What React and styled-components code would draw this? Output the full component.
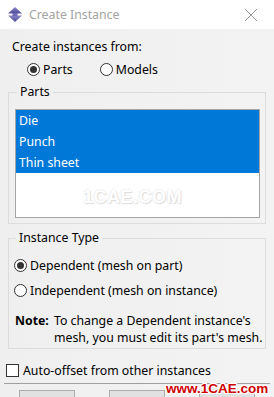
import React from "react";
import styled, { createGlobalStyle } from "styled-components";

const GlobalStyle = createGlobalStyle`
  html, body {
    margin: 0;
    padding: 0;
    background: #f0f0f0;
  }
  body {
    font-family: "Noto Sans", "Segoe UI", sans-serif;
    font-size: 12.3px;
    color: #000;
  }
`;

const Window = styled.div`
  position: relative;
  width: 274px;
  height: 397px;
  overflow: hidden;
  background: linear-gradient(90deg, #efefef 0%, #f3f3f3 100%);
`;

const TitleBar = styled.div`
  height: 29px;
  display: flex;
  align-items: center;
  padding: 0 16px 0 7px;
  background: #fff;
  box-sizing: border-box;
`;

const Title = styled.span`
  flex: 1;
  margin-left: 6px;
  font-size: 12.3px;
  color: #a3a3a3;
`;

const Content = styled.div`
  padding: 10px 8px 0;
`;

const Label = styled.div`
  line-height: 16px;
  padding-left: 4px;
`;

const RadioRow = styled.div`
  display: flex;
  align-items: center;
  gap: ${(p) => p.$gap || 0}px;
  height: ${(p) => p.$h || 18}px;
  margin-top: ${(p) => p.$mt || 0}px;
  padding-left: ${(p) => p.$pl || 0}px;
`;

const RadioItem = styled.label`
  display: flex;
  align-items: center;
  gap: 3px;
`;

const Radio = styled.span`
  position: relative;
  width: 13px;
  height: 13px;
  box-sizing: border-box;
  border: 1px solid #333;
  border-radius: 50%;
  background: #fff;
  &::after {
    content: "";
    display: ${(p) => (p.$checked ? "block" : "none")};
    position: absolute;
    left: 2px;
    top: 2px;
    width: 7px;
    height: 7px;
    border-radius: 50%;
    background: #333;
  }
`;

const Group = styled.fieldset`
  margin: ${(p) => p.$mt || 0}px 0 0;
  padding: ${(p) => p.$pt || 0}px ${(p) => p.$pr || 5}px ${(p) => p.$pb || 0}px
    ${(p) => p.$pl || 6}px;
  border: 1px solid #dcdcdc;
  min-width: 0;
`;

const Legend = styled.legend`
  margin-left: 2px;
  padding: 0 3px;
  line-height: 16px;
  color: #000;
`;

const ListBox = styled.div`
  height: 109px;
  box-sizing: border-box;
  border: 1px solid #a5a5a5;
  background: #fff;
`;

const ListItem = styled.div`
  height: 21px;
  line-height: 21px;
  padding-left: 3px;
  background: ${(p) => (p.$selected ? "#0078d7" : "transparent")};
  color: ${(p) => (p.$selected ? "#fff" : "#000")};
`;

const Note = styled.div`
  display: grid;
  grid-template-columns: 39px 1fr;
  margin-top: 12px;
  padding-left: 1px;
  line-height: 17px;
  white-space: nowrap;
`;

const NoteLabel = styled.span`
  font-weight: 700;
`;

const Footer = styled.div`
  padding: 12px 4px 0;
`;

const CheckRow = styled.label`
  display: flex;
  align-items: center;
  gap: 4px;
  height: 18px;
  padding-left: 2px;
`;

const Checkbox = styled.span`
  width: 13px;
  height: 13px;
  box-sizing: border-box;
  border: 1px solid #333;
  background: #fff;
`;

const Separator = styled.div`
  margin-top: 4px;
  height: 1px;
  background: #a0a0a0;
`;

const ButtonRow = styled.div`
  display: flex;
  gap: 34px;
  margin-top: 6px;
  padding-left: 15px;
`;

const Button = styled.div`
  width: 56px;
  height: 23px;
  box-sizing: border-box;
  border: 1px solid #adadad;
  background: #e1e1e1;
`;

const Watermark = styled.div`
  position: absolute;
  left: 83px;
  top: 187px;
  font-family: "Liberation Sans", Arial, sans-serif;
  font-weight: 700;
  font-size: 18px;
  letter-spacing: 0.5px;
  color: #fff;
  text-shadow: 0 0 2px #d4d4d4, 1px 1px 1px #e0e0e0;
`;

const SiteMark = styled.div`
  position: absolute;
  left: 166px;
  top: 381px;
  font-family: "Liberation Sans", Arial, sans-serif;
  font-weight: 700;
  font-size: 13.5px;
  color: #d00000;
  text-shadow: 1px 0 0 #fff, -1px 0 0 #fff, 0 1px 0 #fff, 0 -1px 0 #fff,
    1px 1px 0 #fff, -1px -1px 0 #fff, 1px -1px 0 #fff, -1px 1px 0 #fff;
`;

const AppIcon = () => (
  <svg width="16" height="15" viewBox="0 0 16 15">
    <defs>
      <linearGradient id="ig" x1="0" y1="0" x2="0" y2="1">
        <stop offset="0" stopColor="#8a86c8" />
        <stop offset="1" stopColor="#4d4a9a" />
      </linearGradient>
    </defs>
    <path d="M8 0 L15 6.5 L1 6.5 Z" fill="url(#ig)" />
    <path d="M1 8.5 L15 8.5 L8 15 Z" fill="url(#ig)" />
    <rect x="5.5" y="6" width="5" height="3" fill="#6d69b3" />
  </svg>
);

const CloseIcon = () => (
  <svg width="14" height="14" viewBox="0 0 14 14">
    <path d="M1 1 L13 13 M13 1 L1 13" stroke="#9a9a9a" strokeWidth="1" />
  </svg>
);

export default function App() {
  const parts = ["Die", "Punch", "Thin sheet"];

  return (
    <Window>
      <GlobalStyle />
      <TitleBar>
        <AppIcon />
        <Title>Create Instance</Title>
        <CloseIcon />
      </TitleBar>

      <Content>
        <Label>Create instances from:</Label>
        <RadioRow $mt={5} $pl={19} $gap={27}>
          <RadioItem>
            <Radio $checked />
            Parts
          </RadioItem>
          <RadioItem>
            <Radio />
            Models
          </RadioItem>
        </RadioRow>

        <Group $mt={6} $pt={9} $pb={5}>
          <Legend>Parts</Legend>
          <ListBox>
            {parts.map((p) => (
              <ListItem key={p} $selected>
                {p}
              </ListItem>
            ))}
          </ListBox>
        </Group>

        <Group $mt={6} $pl={5} $pb={2}>
          <Legend>Instance Type</Legend>
          <RadioRow $h={20} $mt={9}>
            <RadioItem>
              <Radio $checked />
              Dependent (mesh on part)
            </RadioItem>
          </RadioRow>
          <RadioRow $h={20} $mt={5}>
            <RadioItem>
              <Radio />
              Independent (mesh on instance)
            </RadioItem>
          </RadioRow>
          <Note>
            <NoteLabel>Note:</NoteLabel>
            <span>
              To change a Dependent instance's
              <br />
              mesh, you must edit its part's mesh.
            </span>
          </Note>
        </Group>
      </Content>

      <Footer>
        <CheckRow>
          <Checkbox />
          Auto-offset from other instances
        </CheckRow>
        <Separator />
        <ButtonRow>
          <Button />
          <Button />
          <Button />
        </ButtonRow>
      </Footer>

      <Watermark>1CAE.COM</Watermark>
      <SiteMark>www.1CAE.com</SiteMark>
    </Window>
  );
}
